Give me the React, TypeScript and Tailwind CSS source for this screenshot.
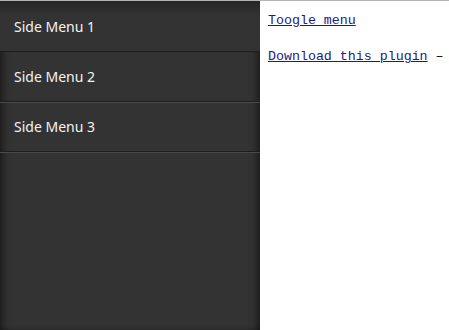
const items = ["Side Menu 1", "Side Menu 2", "Side Menu 3"];

export default function App() {
  return (
    <div className="flex h-[330px] w-[449px] overflow-hidden border-t border-t-[#b4b4b4] bg-white">
      <nav className="flex w-[260px] shrink-0 flex-col bg-[#333333] shadow-[inset_6px_0_8px_-4px_rgba(0,0,0,0.6),inset_-6px_0_8px_-4px_rgba(0,0,0,0.6)]">
        {items.map((label, i) => (
          <a
            key={label}
            href="#"
            className={`flex shrink-0 items-center border-b border-b-[#1e1e1e] pl-[14px] font-['Noto_Sans',sans-serif] text-[14px] text-[#f2f2f2] ${
              i === 0
                ? "h-[51px] bg-[linear-gradient(#262626,#333333_30%)]"
                : "h-[50px] shadow-[0_1px_0_#4a4a4a]"
            }`}
          >
            {label}
          </a>
        ))}
      </nav>
      <div className="flex flex-col gap-[20px] pl-[8px] pt-[12px] font-['Liberation_Mono',monospace] text-[13.3px] leading-[16px] text-black">
        <p>
          <a href="#" className="text-[#1b1b80] underline">
            Toogle menu
          </a>
        </p>
        <p className="whitespace-nowrap">
          <a href="#" className="text-[#1b1b80] underline">
            Download this plugin
          </a>{" "}
          –
        </p>
      </div>
    </div>
  );
}
